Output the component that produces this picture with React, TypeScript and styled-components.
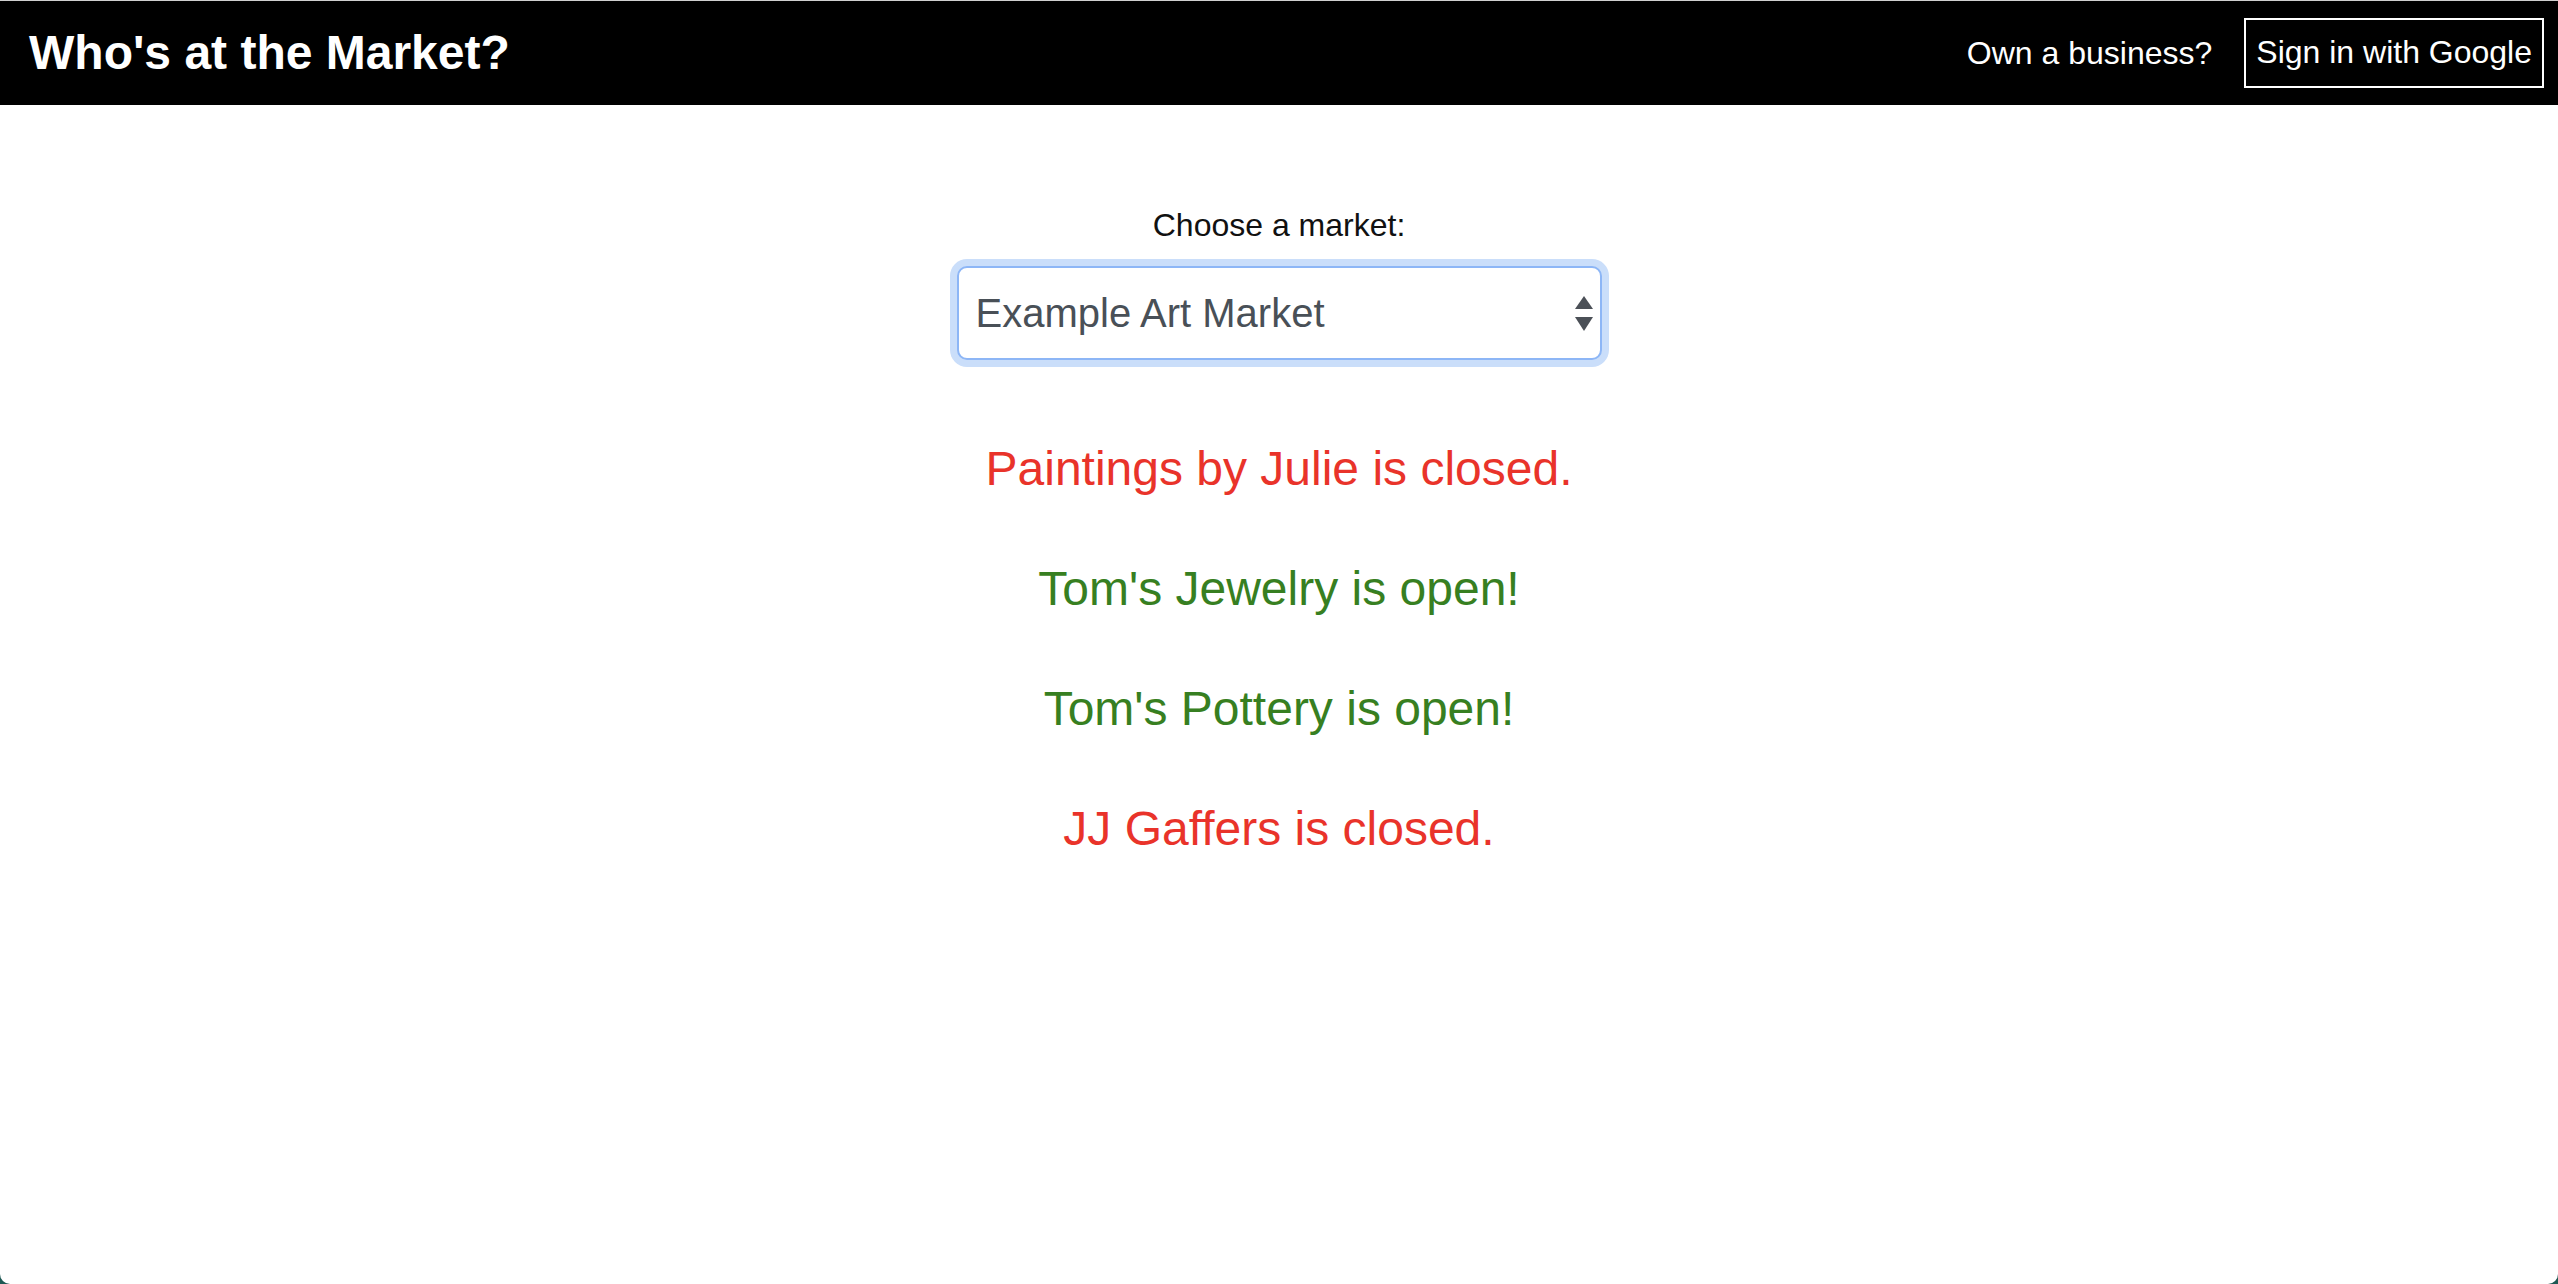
import * as React from 'react';
import styled, { createGlobalStyle } from 'styled-components';

const GlobalStyle = createGlobalStyle`
  html {
    background: #1d5853;
  }
  body {
    margin: 0;
    font-family: 'Liberation Sans', Arial, Helvetica, sans-serif;
    background: #1d5853;
  }
  * {
    box-sizing: border-box;
  }
`;

const Page = styled.div`
  min-height: 100vh;
  background: #ffffff;
  border-top: 1px solid #cfcfcf;
  border-bottom-left-radius: 10px;
  border-bottom-right-radius: 10px;
  display: flex;
  flex-direction: column;
`;

const Header = styled.header`
  height: 104px;
  background: #000000;
  display: flex;
  align-items: center;
  justify-content: space-between;
  padding: 0 14px 0 29px;
`;

const Title = styled.h1`
  margin: 0;
  color: #ffffff;
  font-size: 48px;
  font-weight: 700;
  line-height: 1;
`;

const NavRight = styled.nav`
  display: flex;
  align-items: center;
  gap: 32px;
`;

const NavText = styled.span`
  color: #ffffff;
  font-size: 32px;
`;

const SignInButton = styled.button`
  background: transparent;
  color: #ffffff;
  font-family: inherit;
  font-size: 32px;
  line-height: 37px;
  padding: 14px 10px 15px;
  border: 2px solid #ffffff;
  border-radius: 0;
  cursor: pointer;
`;

const Main = styled.main`
  display: flex;
  flex-direction: column;
  align-items: center;
  padding-top: 102px;
`;

const Label = styled.label`
  font-size: 32px;
  line-height: 36px;
  color: #111111;
`;

const SelectWrap = styled.div`
  position: relative;
  width: 645px;
  margin-top: 23px;
`;

const MarketSelect = styled.select`
  appearance: none;
  -webkit-appearance: none;
  width: 100%;
  height: 94px;
  padding: 0 40px 0 17px;
  font-family: inherit;
  font-size: 40px;
  color: #495057;
  background: #ffffff;
  border: 2px solid #8db6f6;
  border-radius: 10px;
  box-shadow: 0 0 0 7px #cadefa;
  outline: none;
`;

const Arrows = styled.svg`
  position: absolute;
  right: 9px;
  top: 30px;
  pointer-events: none;
`;

const StatusList = styled.ul`
  list-style: none;
  margin: 80px 0 0;
  padding: 0;
  display: flex;
  flex-direction: column;
  align-items: center;
  gap: 63px;
`;

const Status = styled.li<{ open: boolean }>`
  font-size: 48px;
  line-height: 57px;
  color: ${props => (props.open ? '#377f21' : '#e9332a')};
`;

const vendors = [
  { name: 'Paintings by Julie', open: false },
  { name: "Tom's Jewelry", open: true },
  { name: "Tom's Pottery", open: true },
  { name: 'JJ Gaffers', open: false },
];

export default function App(): React.ReactElement {
  return (
    <>
      <GlobalStyle />
      <Page>
        <Header>
          <Title>Who's at the Market?</Title>
          <NavRight>
            <NavText>Own a business?</NavText>
            <SignInButton>Sign in with Google</SignInButton>
          </NavRight>
        </Header>
        <Main>
          <Label htmlFor='market'>Choose a market:</Label>
          <SelectWrap>
            <MarketSelect id='market' defaultValue='example'>
              <option value='example'>Example Art Market</option>
            </MarketSelect>
            <Arrows width='18' height='36' viewBox='0 0 18 36'>
              <polygon points='9,0 18,13 0,13' fill='#4b5057' />
              <polygon points='0,21 18,21 9,35' fill='#4b5057' />
            </Arrows>
          </SelectWrap>
          <StatusList>
            {vendors.map(v => (
              <Status key={v.name} open={v.open}>
                {v.name} {v.open ? 'is open!' : 'is closed.'}
              </Status>
            ))}
          </StatusList>
        </Main>
      </Page>
    </>
  );
}
